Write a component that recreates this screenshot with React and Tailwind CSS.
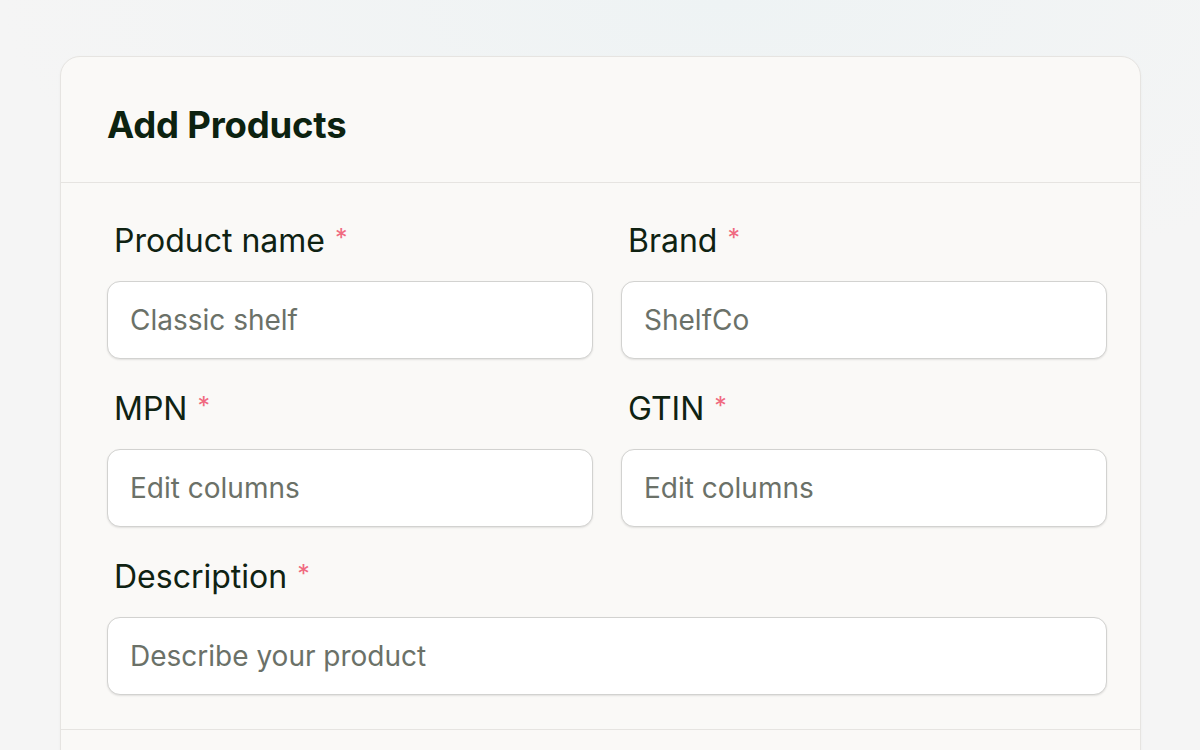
import { useState } from 'react';

function Field({ label, placeholder, value, onChange }) {
  return (
    <label className="flex flex-col">
      <span className="flex h-[40px] items-center pl-[7px] text-[32px] leading-[40px] text-[#0f2212]">
        {label}
        <span className="ml-[10px] -translate-y-[3px] text-[25px] text-[#f06a80]">*</span>
      </span>
      <input
        className="mt-[20px] h-[78px] w-full rounded-[13px] border-[1.5px] border-[#d2d2d0] bg-white pl-[22px] text-[28px] text-[#0f2212] shadow-[0_1px_2px_rgba(0,0,0,0.1)] outline-none placeholder:text-[#6b7168]"
        placeholder={placeholder}
        value={value}
        onChange={(e) => onChange(e.target.value)}
      />
    </label>
  );
}

export default function App() {
  const [form, setForm] = useState({ name: '', brand: '', mpn: '', gtin: '', description: '' });
  const set = (key) => (v) => setForm((f) => ({ ...f, [key]: v }));

  return (
    <div
      className="h-[750px] overflow-hidden bg-[#f5f5f5] bg-[radial-gradient(ellipse_60%_40%_at_60%_0%,#eef3f4,#f5f5f5)] pl-[60px] pr-[59px] pt-[56px]"
      style={{ fontFamily: 'Inter, "Noto Sans", sans-serif' }}
    >
      <div className="rounded-[20px] border border-[#e6e4e1] bg-[#faf9f7] shadow-[0_1px_3px_rgba(0,0,0,0.04)]">
        <div className="flex h-[126px] items-center border-b border-[#e6e4e1] pl-[46px] pt-[11px]">
          <h1 className="text-[36.5px] font-bold leading-none tracking-[-0.2px] text-[#0c2210]">Add Products</h1>
        </div>

        <div className="border-b border-[#e6e4e1] pb-[34px] pl-[46px] pr-[33px] pt-[38px]">
          <div className="grid grid-cols-2 gap-x-[28px] gap-y-[30px]">
            <Field label="Product name" placeholder="Classic shelf" value={form.name} onChange={set('name')} />
            <Field label="Brand" placeholder="ShelfCo" value={form.brand} onChange={set('brand')} />
            <Field label="MPN" placeholder="Edit columns" value={form.mpn} onChange={set('mpn')} />
            <Field label="GTIN" placeholder="Edit columns" value={form.gtin} onChange={set('gtin')} />
            <div className="col-span-2">
              <Field
                label="Description"
                placeholder="Describe your product"
                value={form.description}
                onChange={set('description')}
              />
            </div>
          </div>
        </div>

        <div className="h-[200px]" />
      </div>
    </div>
  );
}
